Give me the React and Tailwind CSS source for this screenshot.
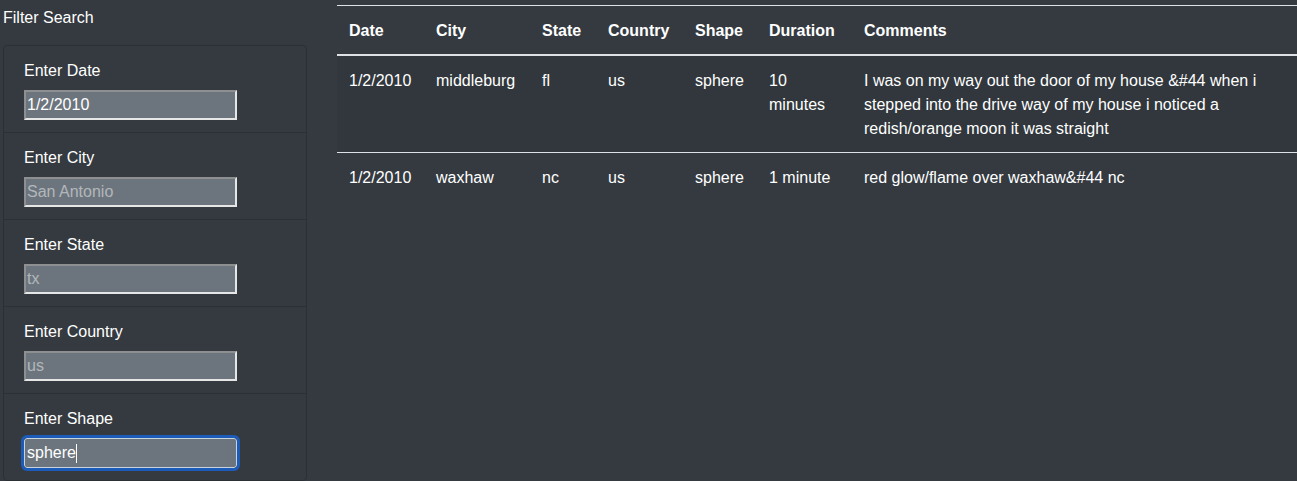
import React from 'react'

const FIELDS = [
  { label: 'Enter Date', value: '1/2/2010' },
  { label: 'Enter City', placeholder: 'San Antonio' },
  { label: 'Enter State', placeholder: 'tx' },
  { label: 'Enter Country', placeholder: 'us' },
]

const COLS = [
  { name: 'Date', w: 'w-[87px]' },
  { name: 'City', w: 'w-[106px]' },
  { name: 'State', w: 'w-[66px]' },
  { name: 'Country', w: 'w-[87px]' },
  { name: 'Shape', w: 'w-[74px]' },
  { name: 'Duration', w: 'w-[95px]' },
  { name: 'Comments', w: 'w-auto' },
]

const ROWS = [
  ['1/2/2010', 'middleburg', 'fl', 'us', 'sphere', '10 minutes',
    'I was on my way out the door of my house &#44 when i stepped into the drive way of my house i noticed a redish/orange moon it was straight'],
  ['1/2/2010', 'waxhaw', 'nc', 'us', 'sphere', '1 minute', 'red glow/flame over waxhaw&#44 nc'],
]

const inputCls =
  'block w-[213px] h-[30px] px-px bg-[#6c757d] text-white text-base border-2 border-t-[#8d8f91] border-l-[#8d8f91] border-b-[#e6e6e6] border-r-[#e6e6e6] outline-none placeholder:text-[#b3b7bb]'

function FilterItem({ label, children, last }) {
  return (
    <li className={`px-5 py-3 ${last ? '' : 'border-b border-[#2b3035]'}`}>
      <label className="block pt-px mb-[7px] text-base leading-6 text-white">{label}</label>
      {children}
    </li>
  )
}

export default function App() {
  return (
    <div className="min-h-screen bg-[#343a40] text-white flex font-['Liberation_Sans',Arial,sans-serif]">
      {/* Filter sidebar */}
      <aside className="w-[307px] shrink-0 pl-[3px] pt-[6px]">
        <h5 className="text-base leading-6 mb-[15px]">Filter Search</h5>
        <ul className="border border-[#2b3035] rounded">
          {FIELDS.map(f => (
            <FilterItem key={f.label} label={f.label}>
              <input className={inputCls} defaultValue={f.value} placeholder={f.placeholder} readOnly />
            </FilterItem>
          ))}
          <FilterItem label="Enter Shape" last>
            <div className="w-[213px] h-[30px] rounded-[3px] outline-[3px] outline-solid outline-[#1c5bb8] flex items-center bg-[#6c757d] border border-[#c9d3de] px-[2px] text-base leading-none text-white">
              sphere<span className="inline-block w-px h-[19px] bg-white" />
            </div>
          </FilterItem>
        </ul>
      </aside>

      {/* Results table */}
      <main className="flex-1 ml-[30px] mt-[5px]">
        <table className="w-full table-fixed border-collapse text-base leading-6 text-left">
          <colgroup>
            {COLS.map(c => <col key={c.name} className={c.w} />)}
          </colgroup>
          <thead>
            <tr>
              {COLS.map(c => (
                <th key={c.name} className="px-3 pt-[13px] pb-[11px] font-bold align-bottom border-t border-b-2 border-[#dee2e6]">
                  {c.name}
                </th>
              ))}
            </tr>
          </thead>
          <tbody>
            {ROWS.map((row, i) => (
              <tr key={i} className={i % 2 === 0 ? 'bg-black/5' : ''}>
                {row.map((cell, j) => (
                  <td key={j} className="px-3 pt-[13px] pb-[11px] align-top border-t border-[#dee2e6]">{cell}</td>
                ))}
              </tr>
            ))}
          </tbody>
        </table>
      </main>
    </div>
  )
}
